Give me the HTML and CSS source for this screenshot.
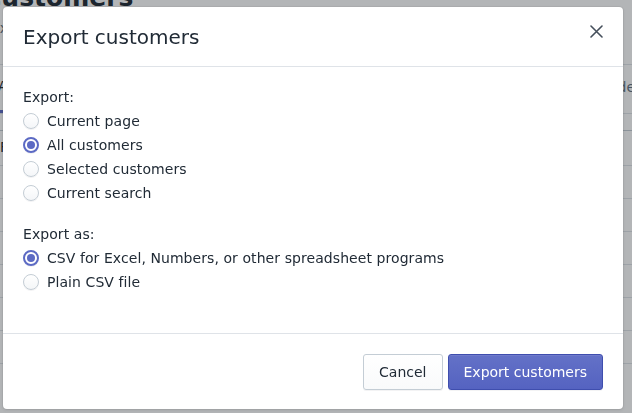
FILE: index.html
```html
<!DOCTYPE html>
<html lang="en">
<head>
  <meta charset="UTF-8" />
  <title>Customers</title>
  <link rel="stylesheet" href="styles.css">
</head>
<body>
  <div class="page">
    <h1 class="page-title">Customers</h1>
    <div class="page-actions">Export &nbsp; Import</div>
    <div class="card">
      <div class="tabs">
        <span class="tab active">All</span>
        <span class="tab-right">Hide</span>
      </div>
      <div class="filter-row">
        <div class="filter-top"></div>
        <span>Filter customers</span>
      </div>
      <div class="row"></div>
      <div class="row"></div>
      <div class="row"></div>
      <div class="row"></div>
      <div class="row"></div>
      <div class="row"></div>
      <div class="row"></div>
    </div>
  </div>

  <div class="backdrop"></div>

  <div class="modal">
    <div class="modal-header">
      <h2>Export customers</h2>
      <button class="close" aria-label="Close">
        <svg width="13" height="13" viewBox="0 0 13 13">
          <path d="M1 1 L12 12 M12 1 L1 12" stroke="#454f5b" stroke-width="1.6" stroke-linecap="round" fill="none"/>
        </svg>
      </button>
    </div>

    <div class="modal-body">
      <div class="group">
        <div class="group-label">Export:</div>
        <label class="choice"><input type="radio" name="scope"><span>Current page</span></label>
        <label class="choice"><input type="radio" name="scope" checked><span>All customers</span></label>
        <label class="choice"><input type="radio" name="scope"><span>Selected customers</span></label>
        <label class="choice"><input type="radio" name="scope"><span>Current search</span></label>
      </div>
      <div class="group">
        <div class="group-label">Export as:</div>
        <label class="choice"><input type="radio" name="format" checked><span>CSV for Excel, Numbers, or other spreadsheet programs</span></label>
        <label class="choice"><input type="radio" name="format"><span>Plain CSV file</span></label>
      </div>
    </div>

    <div class="modal-footer">
      <button class="btn">Cancel</button>
      <button class="btn btn-primary">Export customers</button>
    </div>
  </div>
</body>
</html>
```

FILE: styles.css
```css
body {
  margin: 0;
  background: #fff;
  font-family: "DejaVu Sans", Verdana, sans-serif;
  color: #212b36;
  overflow: hidden;
}
.page {
  margin-left: -17px;
  height: 413px;
}
.page-title {
  margin: -18px 0 0;
  font-size: 25px;
  line-height: 32px;
  font-weight: 700;
}
.page-actions {
  margin-top: 4px;
  margin-left: 8px;
  font-size: 14px;
  line-height: 20px;
  color: #637381;
}
.card {
  margin-top: 26px;
  width: 680px;
  border-top: 1px solid #dfe3e8;
}
.tabs {
  display: flex;
  justify-content: space-between;
  height: 48px;
  border-bottom: 1px solid #dfe3e8;
  font-size: 14px;
}
.tab {
  padding: 13px 0 0 15px;
  width: 30px;
}
.tab.active {
  border-bottom: 3px solid #5c6ac4;
}
.tab-right {
  padding: 14px 28px 0 0;
  color: #637381;
}
.filter-row {
  height: 51px;
  border-bottom: 1px solid #dfe3e8;
  font-size: 14px;
}
.filter-top {
  height: 16px;
  border-bottom: 1px solid #c4cdd5;
  margin-bottom: 8px;
}
.filter-row span {
  padding-left: 17px;
}
.row {
  height: 32px;
  border-bottom: 1px solid #dfe3e8;
}
.backdrop {
  position: fixed;
  inset: 0;
  background: rgba(20, 24, 30, 0.32);
}
.modal {
  position: absolute;
  top: 7px;
  left: 3px;
  width: 620px;
  background: #fff;
  border-radius: 4px;
  box-shadow: 0 0 0 1px rgba(63, 63, 68, 0.05), 0 1px 3px 0 rgba(63, 63, 68, 0.15);
}
.modal-header {
  display: flex;
  justify-content: space-between;
  padding: 16px 20px 15px;
  border-bottom: 1px solid #dfe3e8;
}
.modal-header h2 {
  margin: 0;
  font-size: 20px;
  line-height: 28px;
  font-weight: 400;
}
.close {
  align-self: flex-start;
  margin-top: 2px;
  padding: 0;
  border: none;
  background: none;
  line-height: 0;
  cursor: pointer;
}
.modal-body {
  padding: 20px 20px 20px;
  font-size: 14px;
  line-height: 20px;
  letter-spacing: 0.07px;
}
.group {
  margin-bottom: 19px;
}
.group-label {
  margin-bottom: 2px;
}
.choice {
  display: flex;
  align-items: center;
  height: 24px;
  gap: 8px;
}
.choice input {
  appearance: none;
  -webkit-appearance: none;
  margin: 0;
  width: 16px;
  height: 16px;
  border-radius: 50%;
  border: 1px solid #c4cdd5;
  background: linear-gradient(#fff, #f4f6f8);
  box-shadow: 0 1px 0 rgba(22, 29, 37, 0.05);
  position: relative;
}
.choice input:checked {
  border: 2px solid #5c6ac4;
  background: #fff;
}
.choice input:checked::after {
  content: "";
  position: absolute;
  top: 2px;
  left: 2px;
  width: 8px;
  height: 8px;
  border-radius: 50%;
  background: #5c6ac4;
}
.modal-footer {
  display: flex;
  justify-content: flex-end;
  gap: 5px;
  padding: 20px 20px 19px;
  border-top: 1px solid #dfe3e8;
}
.btn {
  font-family: inherit;
  font-size: 14px;
  line-height: 20px;
  padding: 7px 15px;
  border: 1px solid #c4cdd5;
  border-radius: 3px;
  background: linear-gradient(#fff, #f9fafb);
  box-shadow: 0 1px 0 rgba(22, 29, 37, 0.05);
  color: #212b36;
  cursor: pointer;
}
.btn-primary {
  background: linear-gradient(#6371c7, #5563c1);
  border-color: #3f4eae;
  box-shadow: inset 0 1px 0 #6f7bcb, 0 1px 0 rgba(22, 29, 37, 0.05);
  color: #fff;
}
```
